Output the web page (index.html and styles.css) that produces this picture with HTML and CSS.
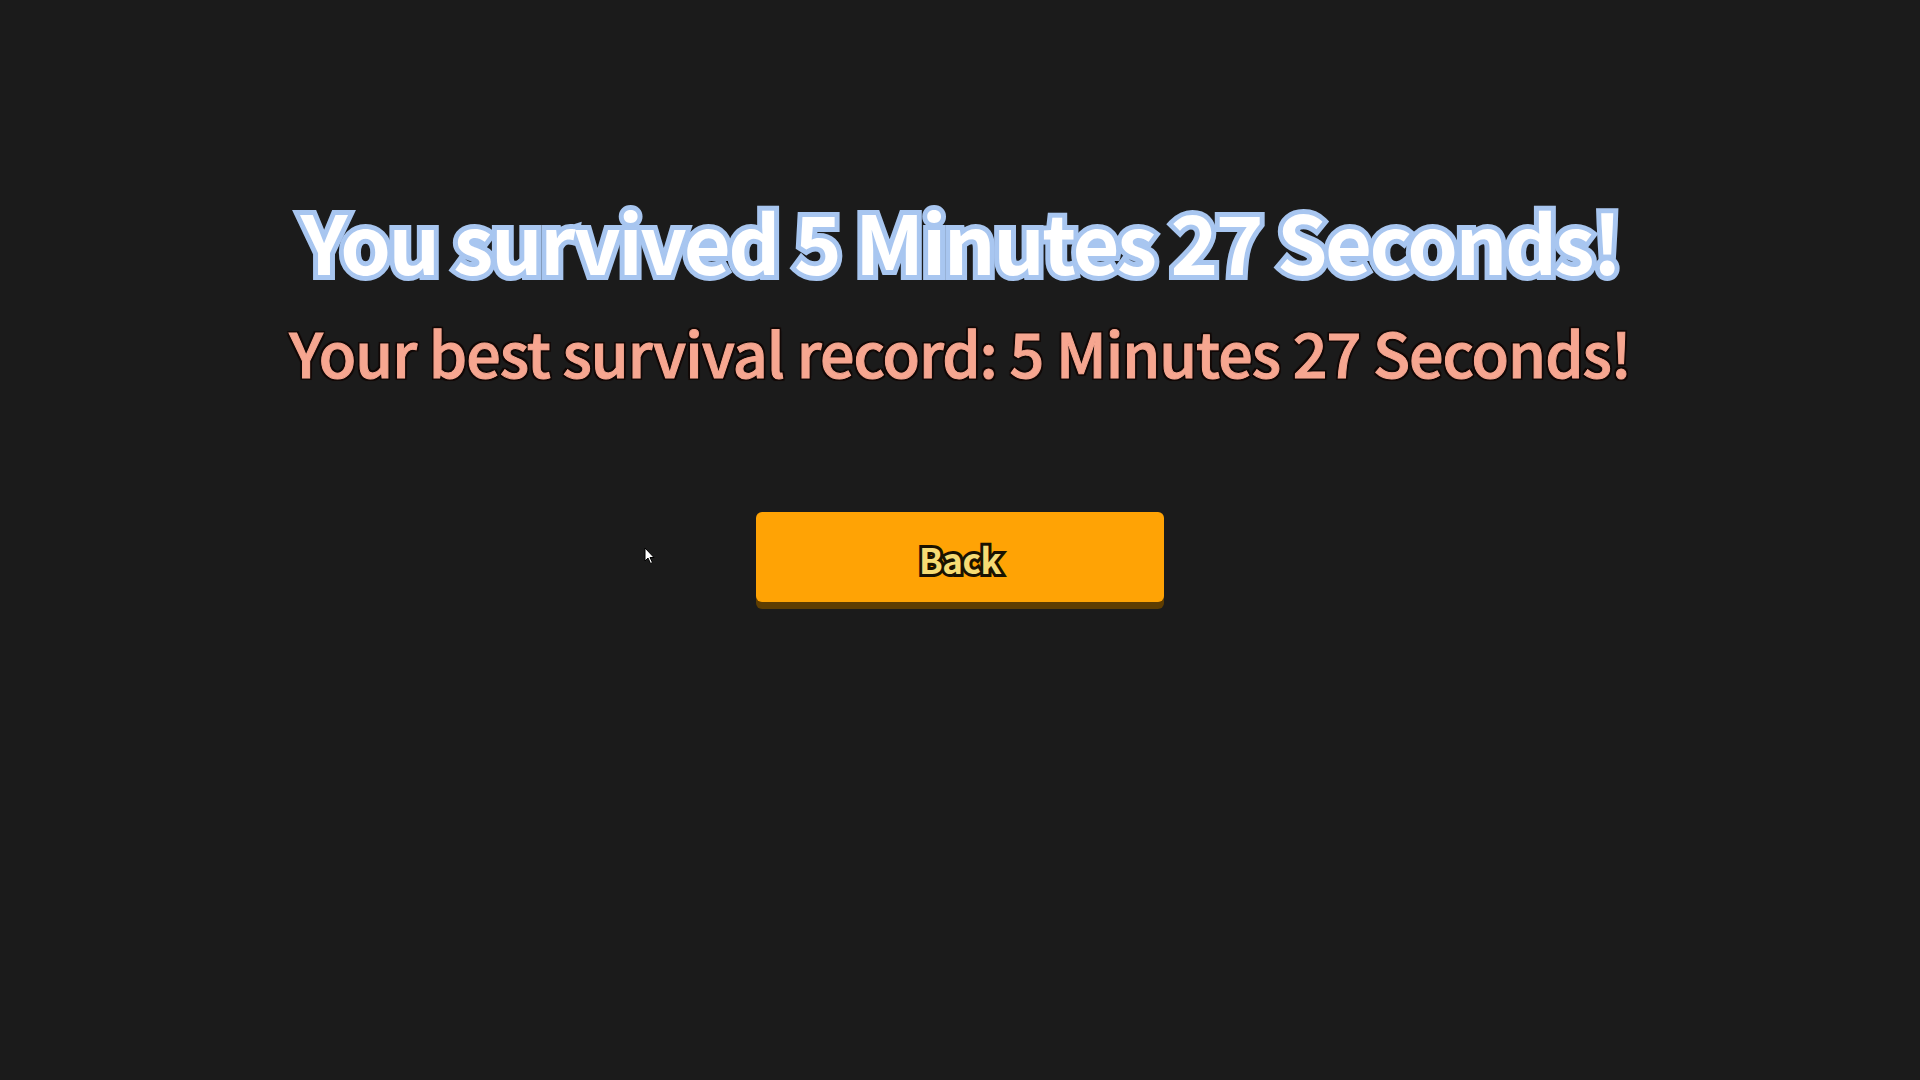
FILE: index.html
```html
<!DOCTYPE html>
<html lang="en">
<head>
    <meta charset="UTF-8">
    <meta name="viewport" content="width=device-width, initial-scale=1.0">
    <title>Game Over</title>
    <link rel="stylesheet" href="styles.css">
</head>
<body>
    <div class="screen">
        <h1 class="result-title">You survived 5 Minutes 27 Seconds!</h1>
        <p class="best-record">Your best survival record: 5 Minutes 27 Seconds!</p>
        <button class="back-btn"><span>Back</span></button>
    </div>

    <svg class="cursor" width="12" height="18" viewBox="0 0 12 18">
        <path d="M1 1 L1 14 L4 11 L6.5 16.5 L8.5 15.5 L6 10.5 L10 10.5 Z" fill="#fff" stroke="#000" stroke-width="1"/>
    </svg>
</body>
</html>
```

FILE: styles.css
```css
body {
    margin: 0;
    padding: 0;
    background-color: #1b1b1b;
    font-family: 'Noto Sans CJK JP', 'Noto Sans', sans-serif;
    height: 1080px;
    overflow: hidden;
}
.screen {
    display: flex;
    flex-direction: column;
    align-items: center;
    padding-top: 190px;
}
.result-title {
    margin: 0;
    font-size: 81px;
    font-weight: 700;
    line-height: 100px;
    letter-spacing: -2.5px;
    color: #ffffff;
    -webkit-text-stroke: 10px #a8c6f0;
    paint-order: stroke fill;
}
.best-record {
    margin: 22px 0 0;
    font-size: 61px;
    font-weight: 500;
    line-height: 80px;
    letter-spacing: -1px;
    color: #f6a690;
    -webkit-text-stroke: 1px #f6a690;
    text-shadow:
        2px 0 0 #120806, -2px 0 0 #120806,
        0 2px 0 #120806, 0 -2px 0 #120806,
        2px 2px 0 #120806, -2px 2px 0 #120806,
        2px -2px 0 #120806, -2px -2px 0 #120806,
        0 0 3px #120806;
}
.back-btn {
    margin-top: 120px;
    width: 408px;
    height: 90px;
    border: none;
    border-radius: 6px;
    background-color: #ffa305;
    box-shadow: 0 7px 0 #5e3d02;
    cursor: pointer;
    font-family: 'Noto Sans CJK JP', 'Noto Sans', sans-serif;
    font-size: 35px;
    font-weight: 700;
    letter-spacing: -0.5px;
    color: #f6dc74;
    -webkit-text-stroke: 6px #1a1200;
    paint-order: stroke fill;
    padding: 2px 0 0;
}
.cursor {
    position: absolute;
    left: 644px;
    top: 547px;
}
```
